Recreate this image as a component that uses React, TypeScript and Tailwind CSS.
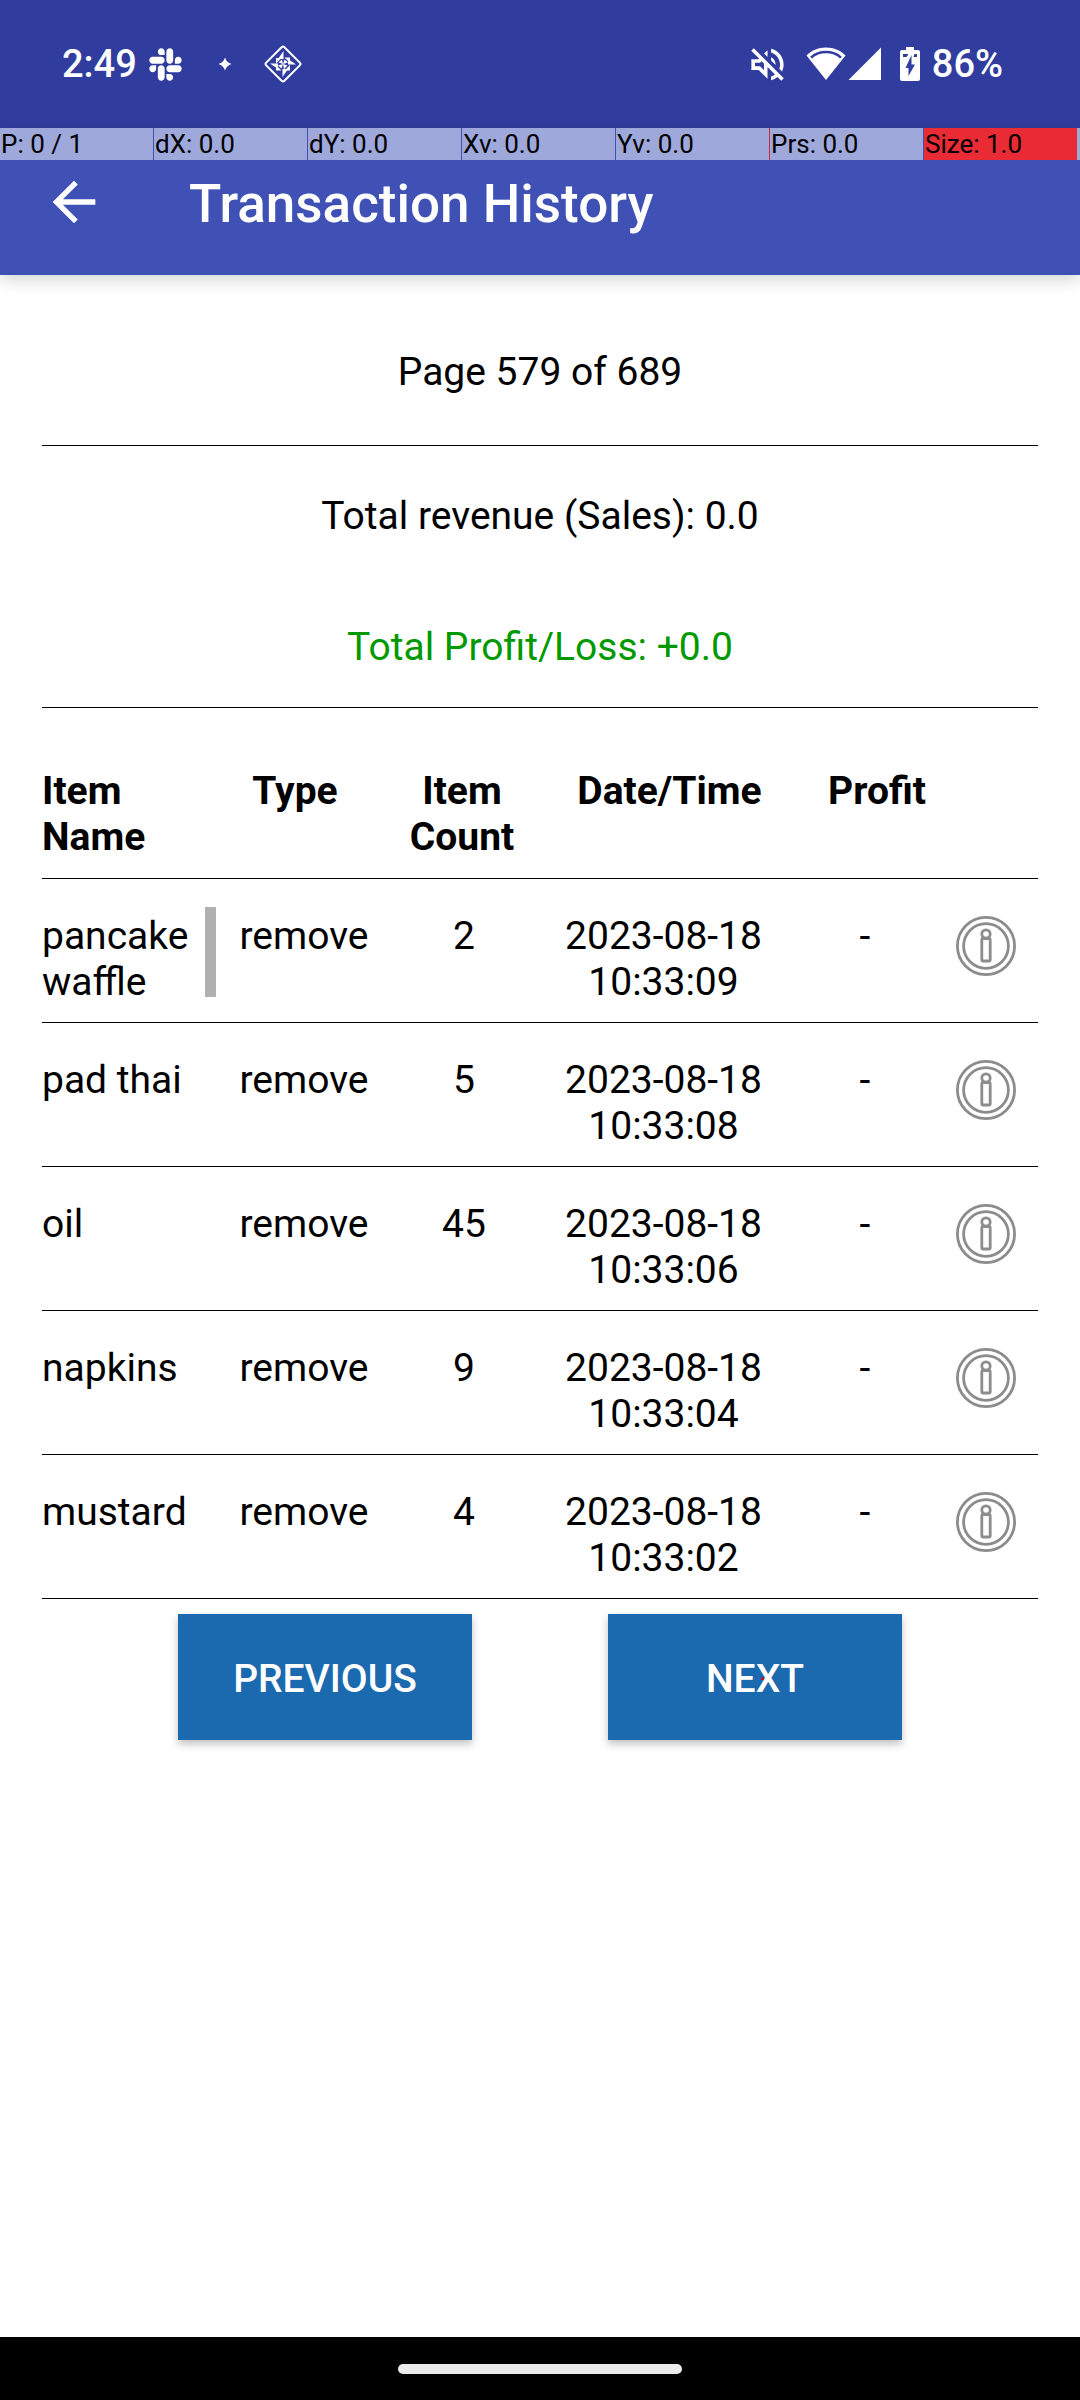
import { FaSlack } from "react-icons/fa";
import { MdArrowBack, MdOutlineVolumeOff } from "react-icons/md";

const pointerCells = [
  { text: "P: 0 / 1", style: "border-[#3f51b5]" },
  { text: "dX: 0.0", style: "border-[#3f51b5]" },
  { text: "dY: 0.0", style: "border-[#3f51b5]" },
  { text: "Xv: 0.0", style: "border-[#3f51b5]" },
  { text: "Yv: 0.0", style: "border-[#c62845]" },
  { text: "Prs: 0.0", style: "border-[#3f51b5]" },
  { text: "Size: 1.0", style: "border-[#9fa8da] bg-[#e92b36]" },
];

const transactions = [
  { name: "pancake waffle", type: "remove", count: 2, date: "2023-08-18", time: "10:33:09", profit: "-", scroll: true },
  { name: "pad thai", type: "remove", count: 5, date: "2023-08-18", time: "10:33:08", profit: "-" },
  { name: "oil", type: "remove", count: 45, date: "2023-08-18", time: "10:33:06", profit: "-" },
  { name: "napkins", type: "remove", count: 9, date: "2023-08-18", time: "10:33:04", profit: "-" },
  { name: "mustard", type: "remove", count: 4, date: "2023-08-18", time: "10:33:02", profit: "-" },
];

function StatusBar() {
  return (
    <div className="flex h-32 items-center justify-between bg-[#303d9f] pl-[62px] pr-[77px] text-[38px] font-medium leading-none text-white">
      <div className="flex items-center">
        <span>2:49</span>
        <FaSlack className="ml-[10px] size-[37px]" aria-hidden="true" />
        <svg className="ml-[34px] size-[14px]" viewBox="0 0 14 14" fill="currentColor" aria-hidden="true">
          <path d="M7 0.500Q8.500 5.500 13.500 7Q8.500 8.500 7 13.500Q5.500 8.500 0.500 7Q5.500 5.500 7 0.500Z" />
        </svg>
        <svg className="ml-8 size-[38px]" viewBox="0 0 38 38" fill="none" aria-hidden="true">
          <path
            d="M17.600 2.200a2 2 0 0 1 2.800 0L35.800 17.600a2 2 0 0 1 0 2.800L20.400 35.800a2 2 0 0 1-2.800 0L2.200 20.400a2 2 0 0 1 0-2.800Z"
            stroke="currentColor"
            strokeWidth="2"
          />
          <g fill="currentColor">
            <path d="M19.500 6v8H14ZM32 19.500h-8V14ZM18.500 32v-8H24ZM6 18.500h8V24Z" />
            <path d="M12 13h1.500l4 0-5.500 5.500ZM20.500 12.500H26V18ZM12 20v5.500h5.500ZM26 20v5.500h-5.500Z" />
            <path d="M19 19l-4.500-1.500L18 14.500ZM19 19l1.500-4.500 3.500 3ZM19 19l4.500 1.500-3.500 3.500ZM19 19l-1.500 4.500-3.500-3Z" />
          </g>
        </svg>
      </div>
      <div className="flex items-center">
        <MdOutlineVolumeOff className="size-[43px]" aria-hidden="true" />
        <svg className="ml-[17px] h-[34px] w-10" viewBox="0 0 40 34" aria-hidden="true">
          <path fill="currentColor" d="M20 0.500C12 0.500 5.200 3.500 0.500 8.500L20 33L39.500 8.500C34.800 3.500 28 0.500 20 0.500Z" />
          <path fill="none" stroke="#303d9f" strokeWidth="2.600" d="M5 10.600C13 3.200 27 3.200 35 10.600" />
        </svg>
        <svg className="ml-[2px] size-[34px]" viewBox="0 0 34 34" fill="currentColor" aria-hidden="true">
          <path d="M33 0.500V33H0.500Z" />
        </svg>
        <svg className="ml-[18px] h-[34px] w-5" viewBox="0 0 20 34" aria-hidden="true">
          <path fill="currentColor" d="M6 0h8v3h4a2 2 0 0 1 2 2v27a2 2 0 0 1-2 2H2a2 2 0 0 1-2-2V5a2 2 0 0 1 2-2h4Z" />
          <path fill="#303d9f" d="M3 7h5.500l-2 3H3ZM14.500 7H17v3h-3.500ZM11.500 8v9.500h3.500L8.500 29v-8H5.500Z" />
        </svg>
        <span className="ml-3">86%</span>
      </div>
    </div>
  );
}

function AppBar() {
  return (
    <header className="relative flex h-[147px] items-center bg-[#3f51b5] px-[42px] text-white shadow-[0_4px_16px_rgba(0,0,0,0.18)]">
      <button type="button" aria-label="Back" className="flex">
        <MdArrowBack className="size-16" />
      </button>
      <h1 className="ml-[83px] pt-1.5 text-[53px] font-medium leading-none">Transaction History</h1>
      <div className="absolute inset-x-0 top-0 grid h-8 grid-cols-7 bg-[#9fa8da] pr-[2px] text-[26px] leading-8 text-black">
        {pointerCells.map((c) => (
          <span key={c.text} className={`border-r pl-[1px] whitespace-nowrap ${c.style}`}>
            {c.text}
          </span>
        ))}
      </div>
    </header>
  );
}

function InfoIcon() {
  return (
    <svg className="size-[66px]" viewBox="0 0 66 66" fill="none" stroke="#8c8c8c" strokeWidth="2.800" aria-hidden="true">
      <circle cx="33" cy="33" r="28.600" />
      <circle cx="33" cy="33" r="22.400" />
      <circle cx="33" cy="21" r="4.200" />
      <rect x="28.800" y="25.500" width="8.400" height="22.500" rx="1" />
    </svg>
  );
}

const headCell = "border-b border-black pt-[60px] pb-[18px] align-top font-bold";
const bodyCell = "border-b border-black pt-[34px] pb-[17px] align-top";
const action =
  "relative h-[126px] w-[294px] bg-[#1b69af] pt-[3px] font-medium text-white shadow-[0_4px_8px_rgba(0,0,0,0.25)]";

export default function App() {
  return (
    <div className="flex min-h-screen flex-col bg-white font-['Roboto',sans-serif] text-black">
      <StatusBar />
      <AppBar />
      <main className="flex-1 px-[42px] text-[39px] leading-[46px]">
        <p className="border-b border-black pt-[74px] pb-[50px] text-center">Page 579 of 689</p>
        <div className="border-b border-black pt-[47px] pb-[37px] text-center">
          <p>Total revenue (Sales): 0.0</p>
          <p className="mt-[85px] text-[#009900]">Total Profit/Loss: +0.0</p>
        </div>
        <table className="w-full table-fixed border-separate border-spacing-0 text-center">
          <colgroup>
            <col className="w-[174px]" />
            <col className="w-[176px]" />
            <col className="w-[144px]" />
            <col className="w-[255px]" />
            <col className="w-[148px]" />
            <col className="w-[99px]" />
          </colgroup>
          <thead>
            <tr>
              <th className={`${headCell} pr-12 text-left`}>Item Name</th>
              <th className={`${headCell} pr-[18px]`}>Type</th>
              <th className={`${headCell} pr-1`}>Item Count</th>
              <th className={`${headCell} pl-3`}>Date/Time</th>
              <th className={`${headCell} pl-6`}>Profit</th>
              <th className={headCell} aria-label="Details" />
            </tr>
          </thead>
          <tbody>
            {transactions.map((t) => (
              <tr key={t.name}>
                <td className={`${bodyCell} relative pr-4 text-left`}>
                  {t.name}
                  {t.scroll && <span className="absolute top-7 right-0 h-[90px] w-[11px] bg-[#b0b0b0]" />}
                </td>
                <td className={bodyCell}>{t.type}</td>
                <td className={bodyCell}>{t.count}</td>
                <td className={bodyCell}>
                  {t.date}
                  <br />
                  {t.time}
                </td>
                <td className={bodyCell}>{t.profit}</td>
                <td className={`${bodyCell} pr-[6px]`}>
                  <button type="button" aria-label={`Details of ${t.name}`} className="mx-auto block">
                    <InfoIcon />
                  </button>
                </td>
              </tr>
            ))}
          </tbody>
        </table>
        <div className="mt-[15px] flex justify-evenly">
          <button type="button" className={action}>
            PREVIOUS
          </button>
          <button type="button" className={action}>
            NEXT
            <span className="absolute top-[63px] left-[153px] size-[3px] rounded-full bg-red-600" />
          </button>
        </div>
      </main>
      <div className="flex h-[63px] items-center justify-center bg-black">
        <div className="h-[10px] w-[284px] rounded-full bg-[#ebebeb]" />
      </div>
    </div>
  );
}
